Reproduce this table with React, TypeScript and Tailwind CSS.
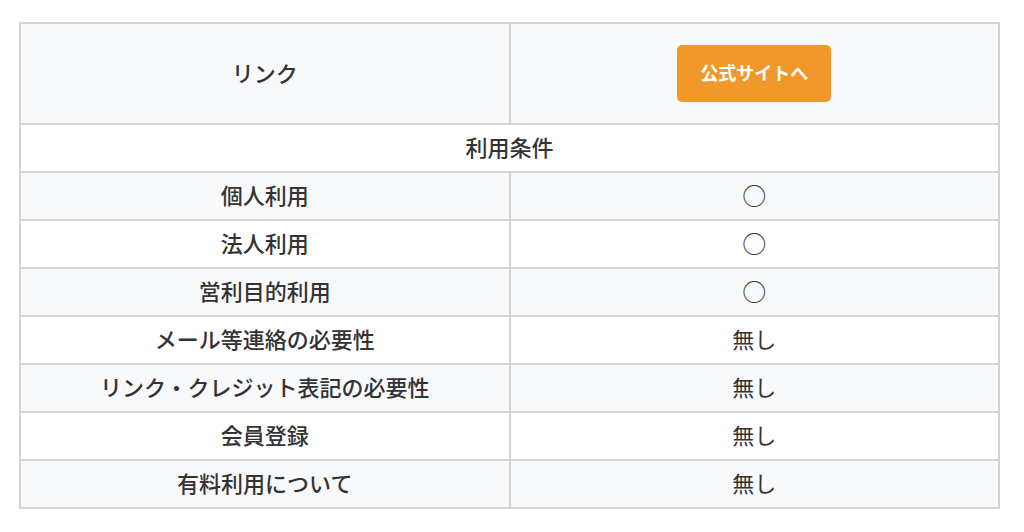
const rows: [string, string][] = [
  ["個人利用", "○"],
  ["法人利用", "○"],
  ["営利目的利用", "○"],
  ["メール等連絡の必要性", "無し"],
  ["リンク・クレジット表記の必要性", "無し"],
  ["会員登録", "無し"],
  ["有料利用について", "無し"],
]

export default function App() {
  return (
    <div
      className="bg-white w-[1024px] h-[532px] pt-[22px] pl-[19px] text-[#333]"
      style={{ fontFamily: '"Noto Sans CJK JP", "Noto Sans", sans-serif' }}
    >
      <table className="w-[981px] border-collapse border-2 border-[#d3d3d3] table-fixed text-[22px]">
        <tbody>
          <tr className="h-[101px] bg-[#f8f9fb]">
            <th className="border-2 border-[#d3d3d3] font-medium w-1/2 pb-[3px]">リンク</th>
            <td className="border-2 border-[#d3d3d3] text-center">
              <a className="inline-flex items-center justify-center w-[154px] h-[57px] rounded-[5px] bg-[#f0992a] text-white text-[18px] font-bold pb-[2px]">
                公式サイトへ
              </a>
            </td>
          </tr>
          <tr className="h-[48px] bg-white">
            <th colSpan={2} className="border-2 border-[#d3d3d3] font-medium pb-[3px]">利用条件</th>
          </tr>
          {rows.map(([label, value], i) => (
            <tr key={label} className={`h-[48px] ${i % 2 === 0 ? "bg-[#f8f9fb]" : "bg-white"}`}>
              <th className="border-2 border-[#d3d3d3] font-medium pb-[3px]">{label}</th>
              <td className={`border-2 border-[#d3d3d3] text-center pb-[3px] ${value === "○" ? "text-[24px]" : ""}`}>{value}</td>
            </tr>
          ))}
        </tbody>
      </table>
    </div>
  )
}
